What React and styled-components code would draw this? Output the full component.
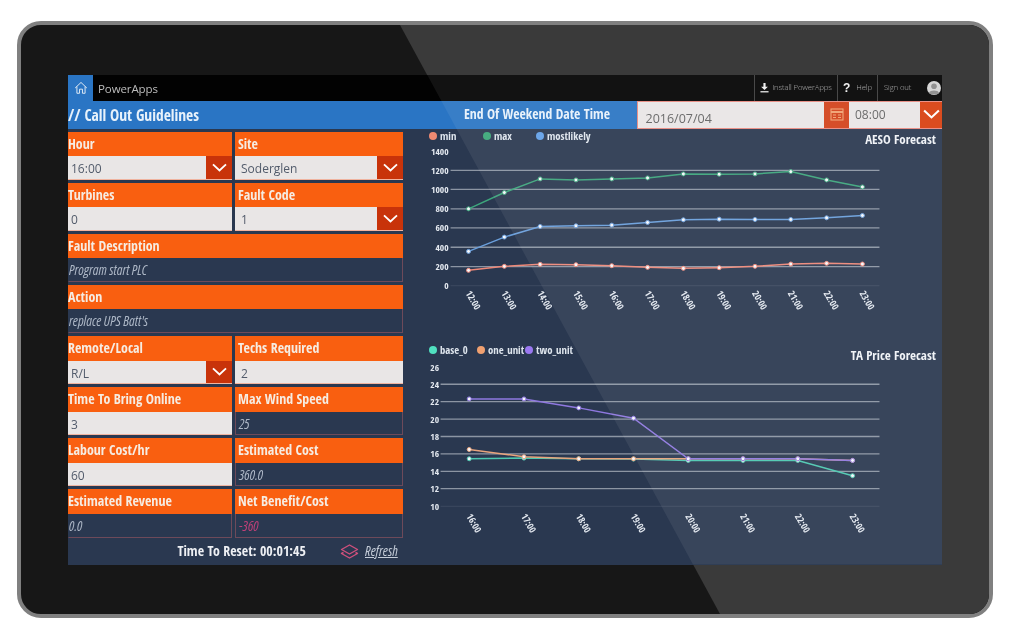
import React from "react";
import styled, { createGlobalStyle } from "styled-components";

const NARROW = `"Open Sans Condensed", "Liberation Sans Narrow", "Roboto Condensed", "Open Sans", sans-serif`;
const BODY = `"Open Sans", "Noto Sans", sans-serif`;

const Global = createGlobalStyle`
  html, body { margin: 0; padding: 0; background: #fff; }
  body { width: 1010px; height: 637px; overflow: hidden; font-family: ${BODY}; }
`;

const Page = styled.div`
  padding: 21px 17px 19px;
  height: 637px;
  box-sizing: border-box;
`;
const Device = styled.div`
  position: relative;
  height: 597px;
  box-sizing: border-box;
  border: 4px solid #808080;
  border-top-width: 4.5px;
  border-radius: 24px;
  background: #171717;
  padding: 49.5px 47px 49px;
  overflow: hidden;
`;
const FrameGloss = styled.div`
  position: absolute;
  inset: 0;
  background: #3a3a3a;
  clip-path: polygon(379px 0, 100% 0, 100% 100%, 699px 100%);
`;
const Screen = styled.div`
  position: relative;
  height: 490px;
  display: flex;
  flex-direction: column;
  background: #2a3850;
  overflow: hidden;
  filter: blur(0.35px);
`;
const ScreenGloss = styled.div`
  position: absolute;
  inset: 0;
  background: rgba(255, 255, 255, 0.065);
  clip-path: polygon(359px 0, 100% 0, 100% 100%, 625px 100%);
  pointer-events: none;
`;

const TopBar = styled.div`
  height: 26.5px;
  flex: none;
  background: #020202;
  display: flex;
  align-items: stretch;
`;
const HomeButton = styled.div`
  width: 25px;
  background: #2a75c4;
  display: flex;
  align-items: center;
  justify-content: center;
  color: #e8f0f8;
`;
const Brand = styled.div`
  margin-left: 5px;
  font: 400 11.5px/28px ${BODY};
  color: #bdbdbd;
  letter-spacing: -0.1px;
  flex: 1;
`;
const TopItem = styled.div`
  display: flex;
  align-items: center;
  justify-content: ${(p) => (p.$start ? "flex-start" : "center")};
  padding-left: ${(p) => (p.$start ? 6 : 0)}px;
  gap: ${(p) => p.$gap || 3}px;
  width: ${(p) => p.$w}px;
  border-left: 1px solid #3c3c3c;
  font: 300 7.8px/1 ${BODY};
  letter-spacing: -0.15px;
  color: #a8a8a8;
  box-sizing: border-box;
`;
const Help = styled.span`
  font: 700 12px/1 "Liberation Sans", sans-serif;
  color: #f0f0f0;
`;
const Avatar = styled.span`
  width: 14px;
  height: 14px;
  margin-left: 13px;
  display: block;
`;

const TitleBar = styled.div`
  height: 27.5px;
  flex: none;
  background: #2a75c4;
  display: flex;
  align-items: stretch;
`;
const Title = styled.div`
  width: 396px;
  font: 700 15.5px/29px ${NARROW};
  color: #e8f2fb;
  white-space: nowrap;
  flex: none;
`;
const WeekendLabel = styled.div`
  width: 172.5px;
  font: 700 13.7px/26px ${NARROW};
  color: #e8f2fb;
  white-space: nowrap;
  flex: none;
`;
const DateBox = styled.div`
  flex: none;
  width: ${(p) => p.$w}px;
  box-sizing: border-box;
  background: #e9e6e6;
  border-top: 1px solid #e88a80;
  border-bottom: 1px solid #e88a80;
  border-left: ${(p) => (p.$first ? "1px solid #e88a80" : "none")};
  color: #626262;
  font: 400 ${(p) => p.$size}px/1 ${BODY};
  display: flex;
  align-items: ${(p) => (p.$low ? "flex-end" : "center")};
  padding: 0 0 ${(p) => (p.$low ? "2px" : "0")} ${(p) => p.$pad}px;
`;
const DateButton = styled.div`
  flex: none;
  width: ${(p) => p.$w}px;
  background: ${(p) => p.$bg};
  border-top: 1px solid #e88a80;
  border-bottom: 1px solid #e88a80;
  box-sizing: border-box;
  display: flex;
  align-items: center;
  justify-content: center;
`;

const Body = styled.div`
  flex: 1;
  display: flex;
  min-height: 0;
`;
const Left = styled.div`
  width: 335px;
  flex: none;
  display: flex;
  flex-direction: column;
`;
const Form = styled.div`
  display: grid;
  grid-template-columns: 164px 168px;
  grid-auto-rows: 48.14px;
  gap: 3px;
  padding-top: 3px;
`;
const Field = styled.div`
  display: flex;
  flex-direction: column;
  grid-column: ${(p) => (p.$wide ? "1 / span 2" : "auto")};
  min-width: 0;
`;
const Label = styled.div`
  flex: 0 0 24.5px;
  background: #f95f10;
  color: #f6ece2;
  font: 700 13.9px/24.5px ${NARROW};
  padding-left: ${(p) => p.$pad || 0}px;
  white-space: nowrap;
  overflow: hidden;
`;
const InputRow = styled.div`
  flex: 1;
  display: flex;
  background: #e9e6e6;
  border-bottom: 1px solid #f0b4a0;
  min-height: 0;
`;
const InputText = styled.div`
  flex: 1;
  font: 400 12px/25px ${BODY};
  color: #525b6b;
  padding-left: ${(p) => p.$pad || 3}px;
`;
const Drop = styled.div`
  flex: 0 0 26px;
  background: #c8330a;
  display: flex;
  align-items: center;
  justify-content: center;
`;
const ReadOnly = styled.div`
  flex: 1;
  border: 1px solid #6e4a5a;
  border-top: none;
  border-left-color: ${(p) => (p.$pad ? "#6e4a5a" : "transparent")};
  box-sizing: border-box;
  font-family: "Open Sans", sans-serif;
  font-style: italic;
  font-weight: 400;
  font-stretch: 75%;
  font-size: 13.8px;
  line-height: 24px;
  color: ${(p) => p.$color || "#aeb8c7"};
  padding-left: ${(p) => p.$pad || 0}px;
  white-space: nowrap;
  overflow: hidden;
`;
const Footer = styled.div`
  flex: 1;
  display: flex;
  align-items: center;
`;
const Reset = styled.div`
  margin-left: 109.5px;
  width: 162px;
  font: 700 13.9px/1 ${NARROW};
  color: #eef0f4;
  white-space: nowrap;
`;
const RefreshLink = styled.div`
  margin-left: 6.5px;
  font-family: "Open Sans", sans-serif;
  font-style: italic;
  font-weight: 400;
  font-stretch: 75%;
  font-size: 13.8px;
  line-height: 1;
  color: #c4ccd8;
  text-decoration: underline;
`;

const Right = styled.div`
  flex: 1;
  display: flex;
  flex-direction: column;
  min-width: 0;
`;
const Chart = styled.div`
  height: ${(p) => p.$h}px;
  flex: none;
  display: flex;
  flex-direction: column;
`;
const ChartHead = styled.div`
  flex: 0 0 ${(p) => p.$h}px;
  display: flex;
  align-items: flex-start;
  padding: 0 6px 0 26px;
`;
const Legend = styled.div`
  display: flex;
  flex: 1;
  margin-top: ${(p) => p.$top}px;
`;
const LegendItem = styled.div`
  display: flex;
  align-items: center;
  gap: 3px;
  width: ${(p) => (p.$w ? `${p.$w}px` : "auto")};
  font: 700 10.7px/12px ${NARROW};
  color: #dfe6ee;
`;
const Dot = styled.span`
  width: 8px;
  height: 8px;
  border-radius: 50%;
  background: ${(p) => p.$c};
`;
const ChartTitle = styled.div`
  font: 700 13px/1 ${NARROW};
  color: #f0f3f7;
  margin-top: ${(p) => p.$top}px;
`;
const Plot = styled.svg`
  display: block;
  flex: 1;
  width: 539px;
  min-height: 0;
`;
const Tick = styled.text`
  font: 700 9.5px ${NARROW};
  fill: #e4e9f0;
`;

const Chevron = ({ size = 15 }) => (
  <svg width={size} height={size * 0.62} viewBox="0 0 16 10" fill="none" stroke="#fff" strokeWidth="2">
    <path d="M1 1.5 L8 8 L15 1.5" />
  </svg>
);

const chart1 = {
  view: "403 146 539 194",
  grid: [[152, "1400", 0], [170.5, "1200", 1], [189.5, "1000", 1], [209, "800", 1], [228, "600", 1], [247.5, "400", 1], [267, "200", 1], [286, "0", 0.15]],
  gridX: 450,
  labelEnd: 448,
  xs: Array.from({ length: 12 }, (_, i) => 468 + i * 35.9),
  labels: ["12:00", "13:00", "14:00", "15:00", "16:00", "17:00", "18:00", "19:00", "20:00", "21:00", "22:00", "23:00"],
  labelY: 301,
  series: [
    { c: "#3da67c", z: [417, 368, 327, 330, 327, 324, 312, 313, 312, 305, 330, 351] },
    { c: "#6a9fdc", z: [545, 502, 470, 468, 466, 458, 450, 448, 449, 449, 444, 437] },
    { c: "#ee8878", z: [602, 590, 584, 585, 588, 593, 596, 594, 590, 583, 581, 583] },
  ],
  base: 70,
};
const chart2 = {
  view: "403 362 539 203",
  grid: [[367.3, "26", 0], [384.3, "24", 1], [401.7, "22", 1], [419.3, "20", 1], [436.7, "18", 1], [454, "16", 1], [471.7, "14", 1], [489, "12", 1], [506.7, "10", 0.15]],
  gridX: 440,
  labelEnd: 438.5,
  xs: Array.from({ length: 8 }, (_, i) => 468.7 + i * 54.9),
  labels: ["16:00", "17:00", "18:00", "19:00", "20:00", "21:00", "22:00", "23:00"],
  labelY: 524,
  series: [
    { c: "#4cc8b0", z: [387, 385, 387, 388, 392, 392, 392, 438] },
    { c: "#e8a47c", z: [359, 381, 387, 387, 387, 387, 387, 392] },
    { c: "#8f78e0", z: [207, 207, 234, 265, 387, 387, 387, 392] },
  ],
  base: 330,
};

function LineChart({ d }) {
  const toY = (z) => d.base + z / 3;
  return (
    <Plot viewBox={d.view}>
      {d.grid.map(([y, t, o]) => (
        <g key={t}>
          <Tick x={d.labelEnd} y={y + 3.5} textAnchor="end">{t}</Tick>
          {o > 0 && <line x1={d.gridX} x2={880} y1={y} y2={y} stroke="#8c95a3" strokeOpacity={o} strokeWidth="1.3" />}
        </g>
      ))}
      {d.labels.map((t, i) => (
        <Tick key={t} x={d.xs[i] + 4} y={d.labelY} textAnchor="middle" dominantBaseline="middle" transform={`rotate(60 ${d.xs[i] + 4} ${d.labelY})`}>{t}</Tick>
      ))}
      {d.series.map((s) => (
        <g key={s.c}>
          <polyline fill="none" stroke={s.c} strokeWidth="1.5" points={s.z.map((z, i) => `${d.xs[i]},${toY(z)}`).join(" ")} />
          {s.z.map((z, i) => (
            <circle key={i} cx={d.xs[i]} cy={toY(z)} r="2" fill="#f4f6fa" stroke={s.c} strokeWidth="1" />
          ))}
        </g>
      ))}
    </Plot>
  );
}

const left = [
  [{ label: "Hour", value: "16:00", drop: true }, { label: "Site", value: "Soderglen", drop: true }],
  [{ label: "Turbines", value: "0" }, { label: "Fault Code", value: "1", drop: true }],
  [{ label: "Fault Description", ro: "Program start PLC", wide: true }],
  [{ label: "Action", ro: "replace UPS Batt's", wide: true }],
  [{ label: "Remote/Local", value: "R/L", drop: true }, { label: "Techs Required", value: "2" }],
  [{ label: "Time To Bring Online", value: "3" }, { label: "Max Wind Speed", ro: "25" }],
  [{ label: "Labour Cost/hr", value: "60" }, { label: "Estimated Cost", ro: "360.0" }],
  [{ label: "Estimated Revenue", ro: "0.0" }, { label: "Net Benefit/Cost", ro: "-360", color: "#c04078" }],
];

function FormField({ f, col }) {
  const pad = col === 1 ? 3 : 0;
  return (
    <Field $wide={f.wide}>
      <Label $pad={pad}>{f.label}</Label>
      {f.ro !== undefined ? (
        <ReadOnly $pad={pad} $color={f.color}>{f.ro}</ReadOnly>
      ) : (
        <InputRow>
          <InputText $pad={col === 1 ? 6 : 3}>{f.value}</InputText>
          {f.drop && <Drop><Chevron /></Drop>}
        </InputRow>
      )}
    </Field>
  );
}

export default function App() {
  return (
    <Page>
      <Global />
      <Device>
        <FrameGloss />
        <Screen>
          <TopBar>
            <HomeButton>
              <svg width="14" height="14" viewBox="0 0 24 24" fill="none" stroke="currentColor" strokeWidth="1.6" strokeLinejoin="round">
                <path d="M2 12 L12 2.5 L22 12" />
                <path d="M5 9.5 V21 H9.5 V14 H14.5 V21 H19 V9.5" />
              </svg>
            </HomeButton>
            <Brand>PowerApps</Brand>
            <TopItem $w={83}>
              <svg width="9" height="10" viewBox="0 0 10 11" fill="#eee">
                <path d="M3.8 0 H6.2 V4 H8.8 L5 7.8 L1.2 4 H3.8 Z" />
                <rect x="0.5" y="9" width="9" height="1.4" />
              </svg>
              Install PowerApps
            </TopItem>
            <TopItem $w={40} $gap={6}><Help>?</Help>Help</TopItem>
            <TopItem $w={65} $start>
              Sign out
              <Avatar>
                <svg width="14" height="14" viewBox="0 0 14 14">
                  <circle cx="7" cy="7" r="7" fill="#d4d4d4" />
                  <circle cx="7" cy="5.2" r="2.8" fill="#8a8a8a" />
                  <path d="M2 12 C3 8.8 11 8.8 12 12 C10.5 14 3.5 14 2 12 Z" fill="#8a8a8a" />
                </svg>
              </Avatar>
            </TopItem>
          </TopBar>
          <TitleBar>
            <Title>// Call Out Guidelines</Title>
            <WeekendLabel>End Of Weekend Date Time</WeekendLabel>
            <DateBox $w={187.5} $pad={8} $size={12.5} $first $low>2016/07/04</DateBox>
            <DateButton $w={25} $bg="#d2421a">
              <svg width="14" height="13" viewBox="0 0 14 13" fill="none" stroke="#f0a070" strokeWidth="1.1">
                <rect x="1" y="1" width="12" height="11" />
                <path d="M1 4 H13" strokeWidth="2" />
                <path d="M3 7 H6 M8 7 H11 M3 9.5 H6 M8 9.5 H11" />
              </svg>
            </DateButton>
            <DateBox $w={71} $pad={6} $size={12}>08:00</DateBox>
            <DateButton $w={22} $bg="#d8400f"><Chevron size={17} /></DateButton>
          </TitleBar>
          <Body>
            <Left>
              <Form>
                {left.map((row) =>
                  row.map((f, i) => <FormField key={f.label} f={f} col={i} />)
                )}
              </Form>
              <Footer>
                <Reset>Time To Reset: 00:01:45</Reset>
                <svg width="19" height="15" viewBox="0 0 19 15" fill="none" stroke="#d0507c" strokeWidth="1.4" strokeLinejoin="round">
                  <path d="M9.5 1 L17.5 5.5 L9.5 10 L1.5 5.5 Z" />
                  <path d="M3.5 8.5 L1.5 9.5 L9.5 14 L17.5 9.5 L15.5 8.5" />
                </svg>
                <RefreshLink>Refresh</RefreshLink>
              </Footer>
            </Left>
            <Right>
              <Chart $h={211}>
                <ChartHead $h={17}>
                  <Legend $top={1}>
                    <LegendItem $w={54}><Dot $c="#ee8a72" />min</LegendItem>
                    <LegendItem $w={53}><Dot $c="#3aa878" />max</LegendItem>
                    <LegendItem><Dot $c="#62a0e8" />mostlikely</LegendItem>
                  </Legend>
                  <ChartTitle $top={4.5}>AESO Forecast</ChartTitle>
                </ChartHead>
                <LineChart d={chart1} />
              </Chart>
              <Chart $h={225}>
                <ChartHead $h={22}>
                  <Legend $top={4}>
                    <LegendItem $w={48}><Dot $c="#50e0c0" />base_0</LegendItem>
                    <LegendItem $w={48}><Dot $c="#f0a070" />one_unit</LegendItem>
                    <LegendItem><Dot $c="#9a78f0" />two_unit</LegendItem>
                  </Legend>
                  <ChartTitle $top={9.5}>TA Price Forecast</ChartTitle>
                </ChartHead>
                <LineChart d={chart2} />
              </Chart>
            </Right>
          </Body>
          <ScreenGloss />
        </Screen>
      </Device>
    </Page>
  );
}
